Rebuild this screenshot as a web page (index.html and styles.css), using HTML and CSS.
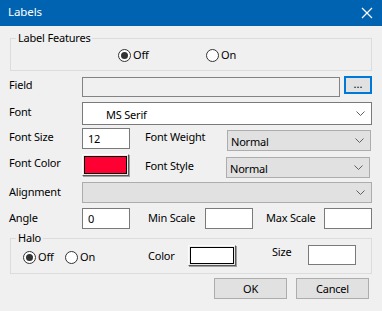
FILE: index.html
```html
<!DOCTYPE html>
<html>
<head>
<meta charset="utf-8">
<link rel="stylesheet" href="styles.css">
</head>
<body>
<div class="window">
  <div class="titlebar">
    <span class="title">Labels</span>
    <svg class="close" width="12" height="12" viewBox="0 0 12 12"><path d="M1 1 L11 11 M11 1 L1 11" stroke="#fff" stroke-width="1.2" fill="none"/></svg>
  </div>
  <div class="content">
    <fieldset class="group group-features">
      <legend>Label Features</legend>
      <div class="radios radios-features">
        <label class="radio radio-first"><span class="circle checked"></span>Off</label>
        <label class="radio"><span class="circle"></span>On</label>
      </div>
    </fieldset>

    <div class="row row-field">
      <span class="lbl lbl-col m1">Field</span>
      <div class="textbox disabled w-field"></div>
      <div class="btn-browse">...</div>
    </div>

    <div class="row row-font">
      <span class="lbl lbl-col m2">Font</span>
      <div class="combo combo-edit w-full">
        <span class="combo-text pad-font">MS Serif</span>
        <svg class="chev" width="9" height="5" viewBox="0 0 9 5"><path d="M0.5 0.5 L4.5 4.5 L8.5 0.5" stroke="#606060" fill="none"/></svg>
      </div>
    </div>

    <div class="row row-size">
      <span class="lbl lbl-col m1">Font Size</span>
      <div class="textbox w-small"><span class="tb-text">12</span></div>
      <span class="lbl lbl-mid m1">Font Weight</span>
      <div class="combo combo-list w-right m2c">
        <span class="combo-text">Normal</span>
        <svg class="chev" width="9" height="5" viewBox="0 0 9 5"><path d="M0.5 0.5 L4.5 4.5 L8.5 0.5" stroke="#606060" fill="none"/></svg>
      </div>
    </div>

    <div class="row row-color">
      <span class="lbl lbl-col m1">Font Color</span>
      <div class="colorbtn w-color"><div class="swatch red"></div></div>
      <span class="lbl lbl-mid2 m4">Font Style</span>
      <div class="combo combo-list w-right m3c">
        <span class="combo-text">Normal</span>
        <svg class="chev" width="9" height="5" viewBox="0 0 9 5"><path d="M0.5 0.5 L4.5 4.5 L8.5 0.5" stroke="#606060" fill="none"/></svg>
      </div>
    </div>

    <div class="row row-align">
      <span class="lbl lbl-col m2">Alignment</span>
      <div class="combo combo-list w-full">
        <span class="combo-text"></span>
        <svg class="chev" width="9" height="5" viewBox="0 0 9 5"><path d="M0.5 0.5 L4.5 4.5 L8.5 0.5" stroke="#606060" fill="none"/></svg>
      </div>
    </div>

    <div class="row row-angle">
      <span class="lbl lbl-col m2">Angle</span>
      <div class="textbox w-small"><span class="tb-text">0</span></div>
      <span class="lbl lbl-min m2">Min Scale</span>
      <div class="textbox w-small"></div>
      <span class="lbl lbl-max m2">Max Scale</span>
      <div class="textbox w-small"></div>
    </div>

    <fieldset class="group group-halo">
      <legend>Halo</legend>
      <div class="halo-row">
        <label class="radio radio-halo-first"><span class="circle checked"></span>Off</label>
        <label class="radio radio-halo"><span class="circle"></span>On</label>
        <span class="lbl lbl-hcolor">Color</span>
        <div class="colorbtn w-hcolor"><div class="swatch white"></div></div>
        <span class="lbl lbl-hsize">Size</span>
        <div class="textbox w-hsize"></div>
      </div>
    </fieldset>

    <div class="row row-buttons">
      <div class="btn">OK</div>
      <div class="btn">Cancel</div>
    </div>
  </div>
</div>
</body>
</html>
```

FILE: styles.css
```css
* { box-sizing: border-box; }
html, body { margin: 0; padding: 0; }
body {
  width: 382px;
  height: 311px;
  background: #f0f0f0;
  font-family: "Noto Sans", "Liberation Sans", sans-serif;
  font-size: 11px;
  letter-spacing: -0.2px;
  color: #000;
  overflow: hidden;
}
.window { width: 382px; height: 311px; background: #f0f0f0; }

.titlebar {
  height: 26px;
  background: #0063b1;
  display: flex;
  align-items: center;
  justify-content: space-between;
  padding: 0 9px 2px 8px;
}
.title { color: #fff; font-size: 11.5px; line-height: 16px; letter-spacing: -0.1px; }
.close { display: block; margin-top: 1px; }

.content { padding: 0; }

/* group boxes */
.group {
  margin: 0 0 0 10px;
  width: 362px;
  border: 1px solid #dcdcdc;
  padding: 0 0 0 5px;
  min-width: 0;
}
.group legend {
  padding: 0 2px;
  line-height: 14px;
  height: 14px;
  font-size: 11px;
}
.group-features { margin-top: 5px; padding-bottom: 6px; }
.group-halo { margin-top: 2px; padding-bottom: 7px; }

.radios { display: flex; height: 18px; align-items: center; }
.radios-features { margin-top: 1px; padding-left: 102px; }
.radio {
  display: flex;
  align-items: center;
  line-height: 16px;
  height: 16px;
}
.radio-first { width: 88px; }
.circle {
  width: 13px;
  height: 13px;
  border: 1px solid #333;
  border-radius: 50%;
  background: #fff;
  margin-right: 2px;
  position: relative;
  flex: none;
}
.circle.checked::after {
  content: "";
  position: absolute;
  left: 2px; top: 2px;
  width: 7px; height: 7px;
  border-radius: 50%;
  background: #333;
}

/* rows */
.row { display: flex; align-items: flex-start; padding-left: 9px; }
.lbl { line-height: 16px; height: 16px; white-space: nowrap; }
.lbl-col { width: 73px; flex: none; }
.m1 { margin-top: 1px; }
.m2 { margin-top: 2px; }
.m4 { margin-top: 4px; }
.m2c { margin-top: 2px; }
.m3c { margin-top: 3px; }

.row-field { margin-top: 5px; height: 21px; }
.row-font { margin-top: 5px; height: 23px; }
.row-size { margin-top: 3px; height: 24px; }
.row-color { margin-top: 2px; height: 24px; }
.row-align { margin-top: 4px; height: 21px; }
.row-angle { margin-top: 5px; height: 21px; }

.textbox {
  height: 21px;
  border: 1px solid #7a7a7a;
  background: #fff;
  flex: none;
  display: flex;
  align-items: center;
}
.textbox.disabled { background: #f0f0f0; border-color: #838383; }
.tb-text { padding-left: 5px; line-height: 16px; }
.w-field { width: 258px; height: 20px; margin-top: 1px; }
.w-small { width: 48px; }

.btn-browse {
  width: 28px;
  height: 18px;
  margin-left: 4px;
  border: 2px solid #0078d7;
  background: #e1e1e1;
  text-align: center;
  font-size: 11px;
  line-height: 11px;
  letter-spacing: 0px;
  flex: none;
}

.combo {
  display: flex;
  align-items: center;
  justify-content: space-between;
  height: 21px;
  flex: none;
  padding: 0 6px 0 3px;
}
.combo-edit { background: #fff; border: 1px solid #7a7a7a; height: 23px; }
.combo-list { background: #e1e1e1; border: 1px solid #adadad; }
.combo-text { line-height: 16px; padding-top: 2px; }
.pad-font { padding-left: 20px; }
.w-full { width: 290px; }
.w-right { width: 144px; }
.chev { display: block; flex: none; }

.lbl-mid { margin-left: 15px; width: 82px; }
.lbl-mid2 { margin-left: 16px; width: 81px; }

.colorbtn {
  flex: none;
  border: 1px solid;
  border-color: #fcfcfc #5a5a5a #5a5a5a #fcfcfc;
  box-shadow: 1px 1px 0 #a0a0a0;
  padding: 1px;
  background: #e8e8e8;
}
.w-color { width: 47px; height: 22px; }
.swatch { width: 100%; height: 100%; border: 1px solid #000; }
.swatch.red { background: #ff0033; }
.swatch.white { background: #fff; }

.lbl-min { margin-left: 18px; width: 57px; }
.lbl-max { margin-left: 13px; width: 58px; }

/* halo */
.halo-row { display: flex; align-items: flex-start; height: 21px; }
.radio-halo-first { margin-left: 7px; margin-top: 4px; width: 42px; }
.radio-halo { margin-top: 4px; width: 83px; }
.lbl-hcolor { margin-top: 3px; width: 40px; }
.w-hcolor { width: 48px; height: 21px; }
.lbl-hsize { margin-left: 36px; margin-top: -1px; width: 36px; }
.w-hsize { width: 48px; height: 20px; }

.row-buttons {
  margin-top: 4px;
  height: 21px;
  justify-content: flex-end;
  gap: 9px;
  padding-right: 13px;
}
.btn {
  width: 73px;
  height: 21px;
  background: #e1e1e1;
  border: 1px solid #adadad;
  text-align: center;
  line-height: 19px;
}
```
